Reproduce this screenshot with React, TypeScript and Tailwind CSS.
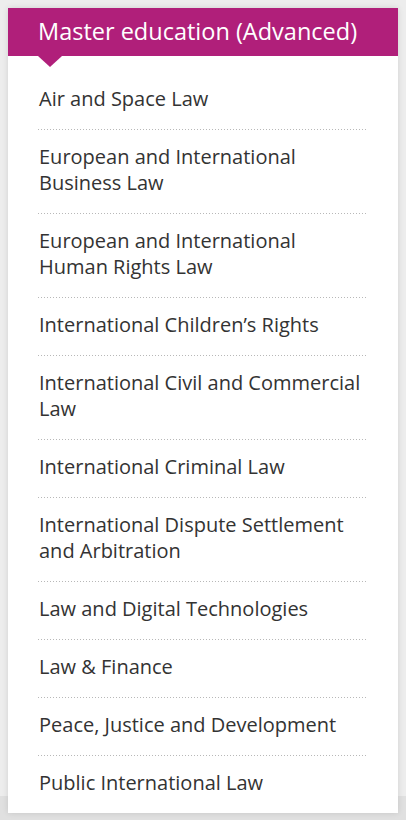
import React from "react";

const items: string[][] = [
  ["Air and Space Law"],
  ["European and International", "Business Law"],
  ["European and International", "Human Rights Law"],
  ["International Children\u2019s Rights"],
  ["International Civil and Commercial", "Law"],
  ["International Criminal Law"],
  ["International Dispute Settlement", "and Arbitration"],
  ["Law and Digital Technologies"],
  ["Law & Finance"],
  ["Peace, Justice and Development"],
  ["Public International Law"],
];

export default function App() {
  return (
    <div className="w-[406px] h-[820px] bg-[#ededed] relative overflow-hidden" style={{ fontFamily: '"Open Sans", "Noto Sans", sans-serif' }}>
      <div className="absolute left-0 right-0 top-[796px] bottom-0 bg-[#e0e0e0]" />
      <div className="relative pt-2 px-2">
        <div className="bg-white w-[390px] shadow-[0_0_6px_rgba(0,0,0,0.12)]">
          <div className="relative bg-[#b01f7a] h-12 flex items-center pl-[30px] pb-px">
            <span className="text-white text-[23.5px] leading-none">Master education (Advanced)</span>
            <div className="absolute left-[30px] top-full w-0 h-0 border-l-[12px] border-r-[12px] border-t-[11px] border-l-transparent border-r-transparent border-t-[#b01f7a]" />
          </div>
          <div className="px-[30px] pt-4">
            {items.map((lines, i) => (
              <div key={i}>
                {i > 0 && (
                  <div className="h-px bg-[linear-gradient(to_right,#b8b8b8_1px,transparent_1px)] bg-[length:3px_1px]" />
                )}
                <div className="pt-[14px] pb-[17px] pl-px text-[20px] leading-[26px] text-[#333] whitespace-nowrap">
                  {lines.map((l, j) => (
                    <div key={j}>{l}</div>
                  ))}
                </div>
              </div>
            ))}
          </div>
        </div>
      </div>
    </div>
  );
}
